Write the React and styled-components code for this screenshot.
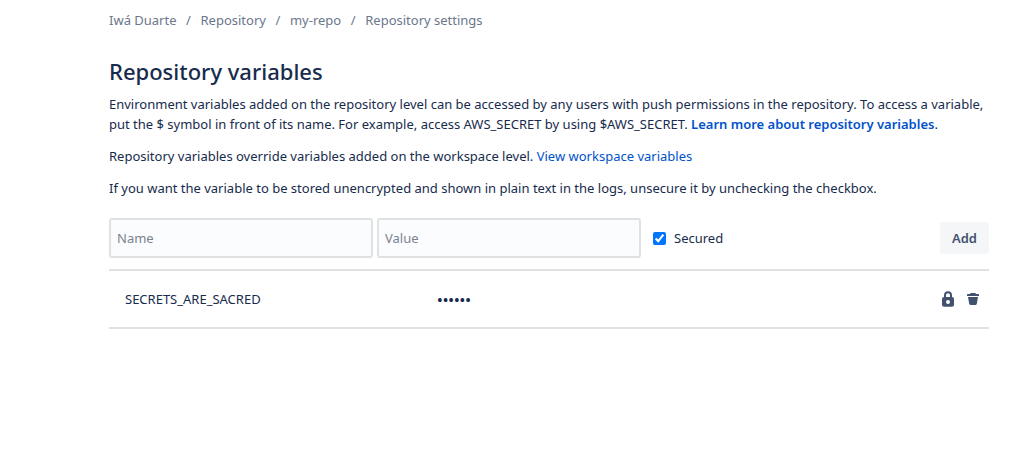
import React from "react";
import styled, { createGlobalStyle } from "styled-components";

const GlobalStyle = createGlobalStyle`
  * { box-sizing: border-box; }
  body {
    margin: 0;
    background: #fff;
    color: #172b4d;
    font-family: "Noto Sans", sans-serif;
    font-size: 13px;
    line-height: 20px;
  }
`;

const Page = styled.main`
  padding: 10px 29px 40px 109px;
`;

const Crumbs = styled.ol`
  display: flex;
  flex-wrap: wrap;
  list-style: none;
  margin: 0 0 27px;
  padding: 0;
`;

const Crumb = styled.li`
  color: #6b778c;
  & + &::before {
    content: "/";
    display: inline-block;
    width: 24px;
    text-align: center;
  }
`;

const Link = styled.a`
  color: ${({ $muted }) => ($muted ? "#6b778c" : "#0052cc")};
  font-weight: ${({ $strong }) => ($strong ? 600 : 400)};
  text-decoration: none;
  &:hover { text-decoration: underline; }
`;

const Title = styled.h1`
  margin: 0 0 9px;
  font-size: 22px;
  font-weight: 500;
  line-height: 28px;
`;

const Text = styled.p`
  margin: 0 0 12px;
`;

const Form = styled.form`
  display: flex;
  align-items: center;
  gap: 4px;
  padding: 8px 0 11px;
`;

const Field = styled.input`
  width: 30%;
  height: 40px;
  padding: 0 6px;
  border: 2px solid #dfe1e3;
  border-radius: 3px;
  background: #fafcfd;
  color: inherit;
  font: inherit;
  &::placeholder { color: #7a838f; opacity: 1; }
`;

const Secured = styled.label`
  display: flex;
  align-items: center;
  gap: 8px;
  margin: 0 auto 0 8px;
`;

const Checkbox = styled.input`
  width: 13px;
  height: 13px;
  margin: 0;
  accent-color: #0075ff;
`;

const AddButton = styled.button`
  height: 32px;
  padding: 0 12px;
  border: 0;
  border-radius: 3px;
  background: #f4f6f7;
  color: #42526e;
  font: inherit;
  font-weight: 600;
`;

const Table = styled.table`
  width: 100%;
  table-layout: fixed;
  border-collapse: separate;
  border-spacing: 0;
  border: solid #dfe1e3;
  border-width: 2px 0;
`;

const Cell = styled.td`
  width: ${({ $width }) => $width || "auto"};
  height: 56px;
  padding: 0 16px;
  vertical-align: middle;
`;

const Mask = styled.span`
  font-size: 15px;
  font-family: "Open Sans", sans-serif;
  font-weight: 600;
`;

const ActionsCell = styled(Cell)`
  padding-right: 8px;
`;

const Actions = styled.div`
  display: flex;
  justify-content: flex-end;
  gap: 9px;
`;

const IconButton = styled.button`
  display: flex;
  padding: 0;
  border: 0;
  background: none;
  color: #42526e;
`;

const LockIcon = () => (
  <svg width="16" height="16" viewBox="0 0 16 16" aria-hidden="true">
    <path d="M5 8V4.200a3 3 0 0 1 6 0V8" fill="none" stroke="currentColor" strokeWidth="2" />
    <path
      fill="currentColor"
      fillRule="evenodd"
      d="M4 6h8a2 2 0 0 1 2 2v5.800a2 2 0 0 1-2 2H4a2 2 0 0 1-2-2V8a2 2 0 0 1 2-2zM8 9a2 2 0 1 0 0 4a2 2 0 1 0 0-4z"
    />
  </svg>
);

const TrashIcon = () => (
  <svg width="16" height="16" viewBox="0 0 16 16" fill="currentColor" aria-hidden="true">
    <path d="M6 2h4a.8.8 0 0 1 .8.800V3H13.200a.8.8 0 0 1 .8.800V5H2V3.800A.8.8 0 0 1 2.800 3H5.200V2.800A.8.8 0 0 1 6 2z" />
    <path d="M3 6h10l-1.200 6.700A1.600 1.600 0 0 1 10.200 14H5.800a1.600 1.600 0 0 1-1.600-1.300z" />
  </svg>
);

const crumbs = ["Iwá Duarte", "Repository", "my-repo", "Repository settings"];
const variables = [{ name: "SECRETS_ARE_SACRED", mask: "••••••" }];

export default function App() {
  return (
    <Page>
      <GlobalStyle />
      <nav aria-label="Breadcrumb">
        <Crumbs>
          {crumbs.map((label) => (
            <Crumb key={label}>
              <Link href="#" $muted>{label}</Link>
            </Crumb>
          ))}
        </Crumbs>
      </nav>
      <Title>Repository variables</Title>
      <Text>
        Environment variables added on the repository level can be accessed by any users with push
        permissions in the repository. To access a variable, put the $ symbol in front of its name.
        For example, access AWS_SECRET by using $AWS_SECRET.{" "}
        <Link href="#" $strong>Learn more about repository variables</Link>.
      </Text>
      <Text>
        Repository variables override variables added on the workspace level.{" "}
        <Link href="#">View workspace variables</Link>
      </Text>
      <Text>
        If you want the variable to be stored unencrypted and shown in plain text in the logs,
        unsecure it by unchecking the checkbox.
      </Text>
      <Form onSubmit={(e) => e.preventDefault()}>
        <Field type="text" placeholder="Name" aria-label="Name" />
        <Field type="text" placeholder="Value" aria-label="Value" />
        <Secured>
          <Checkbox type="checkbox" defaultChecked />
          Secured
        </Secured>
        <AddButton type="submit">Add</AddButton>
      </Form>
      <Table>
        <tbody>
          {variables.map(({ name, mask }) => (
            <tr key={name}>
              <Cell $width="312px">{name}</Cell>
              <Cell><Mask>{mask}</Mask></Cell>
              <ActionsCell $width="96px">
                <Actions>
                  <IconButton type="button" aria-label="Secured variable"><LockIcon /></IconButton>
                  <IconButton type="button" aria-label="Delete variable"><TrashIcon /></IconButton>
                </Actions>
              </ActionsCell>
            </tr>
          ))}
        </tbody>
      </Table>
    </Page>
  );
}
